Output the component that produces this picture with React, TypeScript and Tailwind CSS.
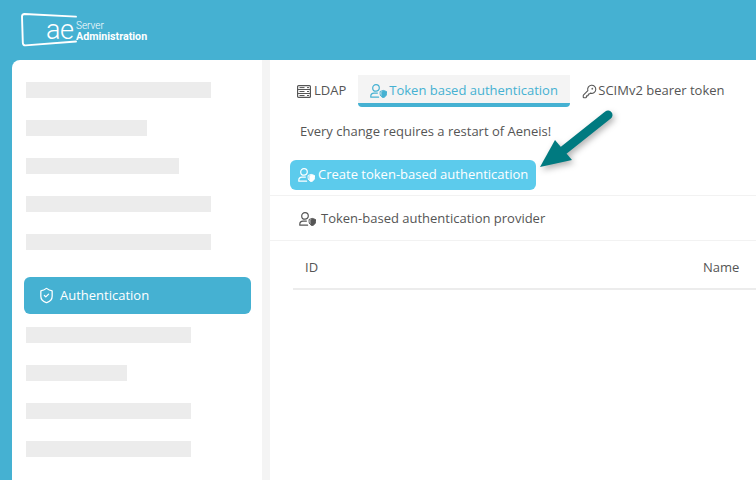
import { KeyRound, ShieldCheck } from "lucide-react";

const barsTop = ["w-[185px]", "w-[121px]", "w-[153px]", "w-[185px]", "w-[185px]"];
const barsBottom = ["w-[165px]", "w-[101px]", "w-[165px]", "w-[165px]"];

function UserShield({ className }: { className?: string }) {
  return (
    <svg viewBox="0 0 17 14" fill="none" className={className} aria-hidden>
      <circle cx="6" cy="3.9" r="3.3" stroke="currentColor" strokeWidth="1.2" />
      <path d="M.8 13.2v-1c0-2 1.5-3.1 3.2-3.1h3.4M.8 13.2h7.8" stroke="currentColor" strokeWidth="1.2" strokeLinecap="round" />
      <path d="M13.3 6.4l3.2 1.1v2.2c0 1.8-1.1 3.1-3.2 4-2.1-.9-3.2-2.2-3.2-4V7.5z" stroke="currentColor" strokeWidth="1" strokeLinejoin="round" />
      <path d="M13.3 6.4l3.2 1.1v2.2c0 1.8-1.1 3.1-3.2 4-.9-.4-1.5-.8-2-1.4V8z" fill="currentColor" />
    </svg>
  );
}

function ServerIcon({ className }: { className?: string }) {
  return (
    <svg viewBox="0 0 14 13" fill="none" className={className} aria-hidden>
      <rect x="0.6" y="0.6" width="12.8" height="11.8" rx="1" stroke="currentColor" strokeWidth="1.2" />
      <path d="M1 4.5h12M1 8.5h12" stroke="currentColor" strokeWidth="1.2" />
      <path d="M2.5 2.6h5M2.5 6.5h5M2.5 10.5h5M10 2.6h2M10 6.5h2M10 10.5h2" stroke="currentColor" strokeWidth="1" />
    </svg>
  );
}

function Logo() {
  return (
    <div className="relative h-[34px] w-[128px] text-white">
      <svg viewBox="0 0 58 34" fill="none" className="absolute left-0 top-0 h-[34px] w-[58px]" aria-hidden>
        <path d="M55 3.6 L3.5 1 Q1 1 1 3.5 L1.8 29.5 Q1.9 32.6 4.6 32.4 L55 28.5" stroke="currentColor" strokeWidth="1.9" strokeLinecap="round" />
      </svg>
      <span className="absolute left-[25px] top-0 text-[27px] leading-[34px] font-light tracking-[-0.5px] font-['Roboto',sans-serif]">ae</span>
      <span className="absolute left-[55px] top-[7px] text-[10px] leading-[12px] font-light font-['Roboto',sans-serif]">Server</span>
      <span className="absolute left-[55px] top-[18px] text-[10.7px] leading-[12px] font-bold font-['Roboto',sans-serif]">Administration</span>
    </div>
  );
}

export default function App() {
  return (
    <div className="flex h-[480px] w-[756px] flex-col overflow-hidden bg-[#45b1d2] font-['Open_Sans',sans-serif] text-[13px] text-[#555]">
      <header className="flex h-[60px] shrink-0 items-start pl-[21px] pt-[13px]">
        <Logo />
      </header>

      <div className="flex min-h-0 flex-1 pl-3">
        <aside className="w-[250px] shrink-0 rounded-tl-lg bg-white pl-3.5 pt-[22px]">
          <div className="flex flex-col gap-[22px]">
            {barsTop.map((w, i) => (
              <div key={i} className={`h-4 bg-[#ececec] ${w}`} />
            ))}
          </div>
          <div className="-ml-0.5 mt-[27px] flex h-[37px] w-[227px] items-center gap-[5px] rounded-md bg-[#45b1d2] pl-[14px] text-white">
            <ShieldCheck className="h-[17px] w-[17px]" strokeWidth={1.8} />
            Authentication
          </div>
          <div className="mt-[13px] flex flex-col gap-[22px]">
            {barsBottom.map((w, i) => (
              <div key={i} className={`h-4 bg-[#ececec] ${w}`} />
            ))}
          </div>
        </aside>

        <div className="w-2 shrink-0 bg-[#f4f4f4]" />

        <main className="relative min-w-0 flex-1 bg-white pt-[15px]">
          <nav className="flex h-8 items-start pl-[27px]">
            <div className="flex h-8 items-center gap-[3px] pr-3">
              <ServerIcon className="h-[13px] w-[14px] text-[#555]" />
              LDAP
            </div>
            <div className="flex h-8 w-[212px] items-center gap-0.5 rounded-b-sm border-b-[4px] border-[#45b1d2] bg-[#f4f4f4] pl-3 pt-1 text-[#45b1d2]">
              <UserShield className="h-[14px] w-[17px]" />
              Token based authentication
            </div>
            <div className="flex h-8 items-center gap-px pl-3">
              <KeyRound className="h-[15px] w-[15px]" strokeWidth={1.7} />
              SCIMv2 bearer token
            </div>
          </nav>

          <p className="mt-[15px] pl-[30px] leading-[18px]">Every change requires a restart of Aeneis!</p>

          <button className="ml-5 mt-[20px] flex h-[30px] w-[246px] items-center gap-[3px] rounded-md bg-[#5ccbec] pl-2 text-white">
            <UserShield className="h-[14px] w-[17px]" />
            Create token-based authentication
          </button>

          <div className="mt-[5px] flex h-[46px] items-center gap-[5px] border-y border-[#f2f2f2] pl-[29px] pt-px">
            <UserShield className="h-[14px] w-[17px]" />
            Token-based authentication provider
          </div>

          <div className="ml-[23px] flex h-[49px] items-center border-b-2 border-[#ececec] pl-3 pt-[6px]">
            <span className="w-[398px]">ID</span>
            <span>Name</span>
          </div>

          {/* callout arrow pasted over the screenshot */}
          <svg viewBox="0 0 90 70" className="absolute left-[266px] top-[45px] h-[70px] w-[90px] drop-shadow-[2px_3px_3px_rgba(0,0,0,0.3)]" aria-hidden>
            <path d="M72 10 L28 45" stroke="#007a80" strokeWidth="9" strokeLinecap="round" />
            <path d="M4 62 L19 35 L36 55z" fill="#007a80" />
          </svg>
        </main>
      </div>
    </div>
  );
}
